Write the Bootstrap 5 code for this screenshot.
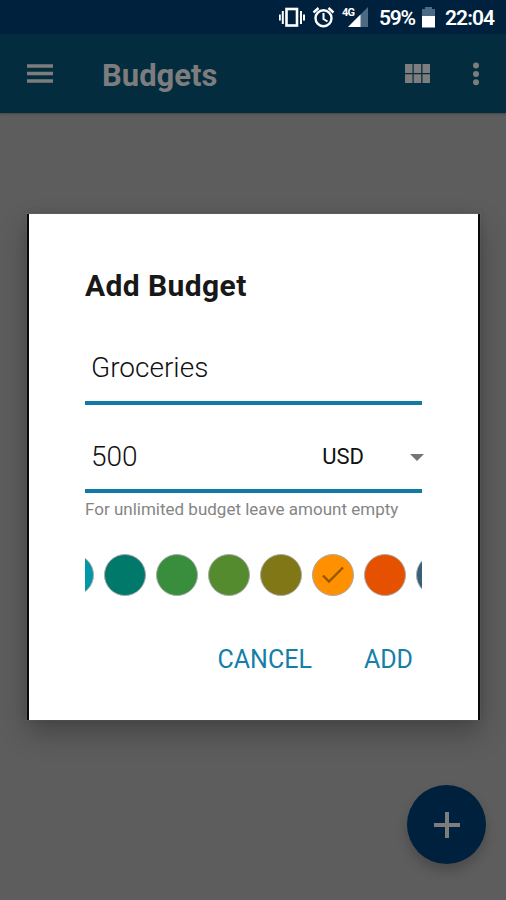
<!DOCTYPE html>
<html lang="en">
<head>
<meta charset="utf-8">
<meta name="viewport" content="width=device-width, initial-scale=1">
<title>Budgets</title>
<link rel="stylesheet" href="https://cdn.jsdelivr.net/npm/bootstrap@5.3.0/dist/css/bootstrap.min.css">
<style>
body{font-family:Roboto,"Liberation Sans",sans-serif;background:#5d5d5d;height:900px;overflow:hidden}
svg{display:block;flex:none}
.statusbar{height:34px;background:#00213d;color:#fff;padding-right:7px}
.appbar{height:79px;background:#042c3f;color:#7d7d7d;padding:0 26px 0 27px;box-shadow:0 1px 2px #0004}
.app-title{font-size:31px;font-weight:700;line-height:76px;padding-top:4px;margin-left:49px}
.dialog{width:453px;height:506px;margin:101px 0 0 27px;padding:0 56px;background:#fff;border:solid #080808;border-width:0 2px;box-shadow:0 13px 26px #0004,0 0 7px #0002,0 0 1px 1px #7775}
.dialog-title{font-size:30px;font-weight:700;line-height:34px;letter-spacing:.4px;padding-top:55px;color:#181818}
.field{height:88px;border-bottom:4px solid #0f7aa6;padding:0 6px 15px;color:#111;font-size:28px;font-weight:300}
.field-name{height:102px;padding-bottom:16px}
.field span{line-height:34px}
.f-cur{font-size:22px;font-weight:400;gap:46px;margin-right:-2px;color:#111}
.hint{font-size:17px;line-height:24px;color:#858585;padding-top:4px;height:29px;white-space:nowrap}
.swatches{height:44px;margin-top:32px}
.swatches-track{gap:10px;margin-left:-33px}
.swatch{width:42px;height:42px;border:1px solid #a9a9a9;flex:none}
.actions{margin-top:45px;gap:52px;padding-right:9px}
.act{font-size:25px;line-height:34px;color:#157fa8;padding:0;border:0;background:none}
.fab{width:79px;height:79px;background:#00213d;margin:65px 20px 0 auto;box-shadow:0 7px 12px #0003}
</style>
</head>
<body class="m-0">
<header>
  <div class="statusbar d-flex justify-content-end">
    <svg width="220" height="34" viewBox="0 0 220 34" fill="none">
      <g stroke="#fff">
        <rect x="7.5" y="9" width="10.5" height="16.5" stroke-width="2.6"/>
        <path d="M3.8 11v13M22 11v13" stroke-width="2"/><path d="M.8 14.5v6M25 14.5v6" stroke-width="2"/>
        <circle cx="44.5" cy="18.2" r="8" stroke-width="2.4"/>
        <path d="M44.5 13v6l4 2.5" stroke-width="2"/><path d="M34.5 12.5l5-4.5M54.5 12.5l-5-4.5" stroke-width="2.4"/>
      </g>
      <path d="M89 7v20H69z" fill="#4d6a85"/><path d="M81.5 14.5V27H69z" fill="#fff"/>
      <text x="63" y="16" fill="#fff" font-size="11" font-weight="700" textLength="13">4G</text>
      <text x="100" y="25" fill="#fff" font-size="21" font-weight="600" textLength="37">59%</text>
      <path d="M143 9h3V7h7v2h3v7h-13z" fill="#4d6a85"/><path d="M143 16h13v11.5h-13z" fill="#fff"/>
      <text x="166" y="25" fill="#fff" font-size="21" font-weight="600" textLength="50">22:04</text>
    </svg>
  </div>
  <nav class="appbar d-flex align-items-center">
    <svg width="26" height="20" viewBox="0 0 26 20"><path d="M0 2h26M0 9.5h26M0 17h26" stroke="currentColor" stroke-width="3.6"/></svg>
    <span class="app-title">Budgets</span>
    <svg class="ms-auto" width="25" height="19" viewBox="0 0 25 19"><path d="M0 0h7.5v9H0zM8.7 0h7.5v9H8.7zM17.5 0H25v9h-7.5zM0 10.2h7.5V19H0zM8.7 10.2h7.5V19H8.7zM17.5 10.2H25V19h-7.5z" fill="currentColor"/></svg>
    <svg class="ms-4" width="26" height="24" viewBox="-18 0 26 24" fill="currentColor"><circle cx="4" cy="3.5" r="3"/><circle cx="4" cy="12" r="3"/><circle cx="4" cy="20.3" r="3"/></svg>
  </nav>
</header>
<main class="dialog">
  <h1 class="dialog-title m-0">Add Budget</h1>
  <div class="field field-name d-flex align-items-end"><span>Groceries</span></div>
  <div class="field d-flex align-items-end justify-content-between pe-0"><span>500</span>
    <span class="d-flex align-items-center f-cur"><span>USD</span>
    <svg width="14" height="7" viewBox="0 0 14 7"><path d="M0 0h14L7 7z" fill="#757575"/></svg></span>
  </div>
  <div class="hint">For unlimited budget leave amount empty</div>
  <div class="swatches overflow-hidden">
    <div class="swatches-track d-flex">
      <i class="swatch rounded-circle" style="background:#0097a7"></i>
      <i class="swatch rounded-circle" style="background:#00796b"></i>
      <i class="swatch rounded-circle" style="background:#388e3c"></i>
      <i class="swatch rounded-circle" style="background:#558b2f"></i>
      <i class="swatch rounded-circle" style="background:#827717"></i>
      <i class="swatch rounded-circle d-flex align-items-center justify-content-center" style="background:#ff9100"><svg width="22" height="18" viewBox="0 0 22 18"><path d="M1 9.5l6 6L21 1.5" fill="none" stroke="#945700" stroke-width="2.4"/></svg></i>
      <i class="swatch rounded-circle" style="background:#e65100"></i>
      <i class="swatch rounded-circle" style="background:#37617a"></i>
    </div>
  </div>
  <div class="actions d-flex justify-content-end">
    <button class="act">CANCEL</button><button class="act">ADD</button>
  </div>
</main>
<div class="fab rounded-circle d-flex align-items-center justify-content-center">
  <svg width="26" height="26" viewBox="0 0 26 26"><path d="M13 0v26M0 13h26" stroke="#7d7d7d" stroke-width="4"/></svg>
</div>
<script src="https://cdn.jsdelivr.net/npm/bootstrap@5.3.0/dist/js/bootstrap.bundle.min.js"></script>
</body>
</html>
